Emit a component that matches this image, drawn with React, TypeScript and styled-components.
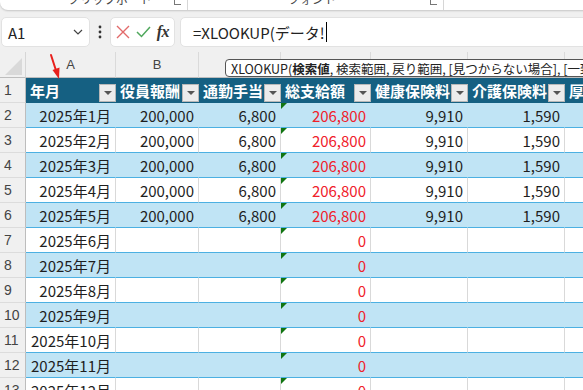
import React from 'react';
import styled, { createGlobalStyle } from 'styled-components';

const GlobalStyle = createGlobalStyle`
  html, body {
    margin: 0;
    padding: 0;
    background: #f0f0f0;
    overflow: hidden;
  }
  * {
    box-sizing: border-box;
  }
`;

const FONT = `"Noto Sans CJK JP", "Noto Sans", sans-serif`;
const HEAD_BLUE = '#156082';
const BAND = '#c0e4f5';
const BAND_LINE = '#4cb0e2';

const Page = styled.div`
  position: relative;
  width: 583px;
  height: 390px;
  overflow: hidden;
  display: flex;
  flex-direction: column;
  font-family: ${FONT};
  background: #f0f0f0;
`;

const Ribbon = styled.div`
  height: 10px;
  flex-shrink: 0;
  background: #ffffff;
  border-bottom-left-radius: 8px;
  box-shadow: 0 1px 2px rgba(0, 0, 0, 0.18);
  overflow: hidden;
  display: flex;
  align-items: flex-start;
  margin-right: -10px;
`;

const RibbonGroup = styled.div<{ $width: number; $pad?: number }>`
  width: ${(p) => p.$width}px;
  flex-shrink: 0;
  height: 10px;
  display: flex;
  align-items: flex-start;
  padding-left: ${(p) => p.$pad ?? 0}px;
  position: relative;
  border-right: 1px solid #d6d6d6;
`;

const RibbonLabel = styled.span`
  margin-top: -8px;
  font-size: 12px;
  line-height: 14px;
  color: #444;
  white-space: nowrap;
`;

const Launcher = styled.span`
  position: absolute;
  right: 6px;
  top: 0;
  width: 7px;
  height: 5px;
  border-left: 1px solid #777;
  border-bottom: 1px solid #777;
`;

const FormulaRow = styled.div`
  display: flex;
  align-items: stretch;
  flex-shrink: 0;
  height: 30px;
  margin-top: 7px;
  padding-left: 1px;
  margin-right: -12px;
`;

const NameBox = styled.div`
  width: 89px;
  flex-shrink: 0;
  background: #fff;
  border: 1px solid #e2e2e2;
  border-radius: 5px;
  display: flex;
  align-items: center;
  justify-content: space-between;
  padding: 0 6px 0 6px;
  font-size: 15px;
  color: #222;
`;

const Dots = styled.div`
  width: 20px;
  flex-shrink: 0;
  display: flex;
  align-items: center;
  justify-content: center;
`;

const ButtonBox = styled.div`
  width: 65px;
  flex-shrink: 0;
  background: #fff;
  border: 1px solid #e2e2e2;
  border-radius: 5px;
  display: flex;
  align-items: center;
  justify-content: space-between;
  padding: 0 5px 0 5px;
`;

const Fx = styled.span`
  font-family: "Liberation Serif", "DejaVu Serif", serif;
  font-style: italic;
  font-weight: bold;
  font-size: 16px;
  color: #333;
  letter-spacing: -0.5px;
`;

const FormulaInput = styled.div`
  flex: 1;
  margin-left: 5px;
  background: #fff;
  border: 1px solid #e2e2e2;
  border-radius: 5px;
  display: flex;
  align-items: center;
  padding-left: 12px;
  font-size: 15px;
  color: #222;
  white-space: nowrap;
`;

const Caret = styled.span`
  display: inline-block;
  width: 1px;
  height: 20px;
  background: #000;
  margin-left: 1px;
`;

const Sheet = styled.div`
  margin-top: 5px;
  display: grid;
  grid-template-columns: 26px 90px 83px 82px 90px 97px 97px 60px;
  grid-template-rows: 26px;
  grid-auto-rows: 25px;
  width: 625px;
  flex-shrink: 0;
`;

const Corner = styled.div`
  background: #f0f0f0;
  border-right: 1px solid #d6d6d6;
  border-bottom: 1px solid #bdbdbd;
  position: relative;
  &::after {
    content: '';
    position: absolute;
    right: 3px;
    bottom: 2px;
    border-style: solid;
    border-width: 0 0 17px 17px;
    border-color: transparent transparent #d9d9d9 transparent;
  }
`;

const ColHead = styled.div`
  background: #f0f0f0;
  border-right: 1px solid #dadada;
  border-bottom: 1px solid #bdbdbd;
  display: flex;
  align-items: center;
  justify-content: center;
  font-size: 13px;
  color: #444;
  font-family: "Liberation Sans", Arial, sans-serif;
`;

const RowNum = styled.div`
  background: #f0f0f0;
  border-right: 1px solid #bdbdbd;
  border-bottom: 1px solid #dcdcdc;
  display: flex;
  align-items: center;
  padding-left: 4px;
  font-size: 14px;
  color: #444;
  font-family: "Liberation Sans", Arial, sans-serif;
`;

const HeadCell = styled.div`
  background: ${HEAD_BLUE};
  color: #fff;
  font-weight: bold;
  font-size: 15px;
  display: flex;
  align-items: center;
  justify-content: space-between;
  padding-left: 4px;
  white-space: nowrap;
  overflow: hidden;
`;

const FilterButton = styled.span`
  align-self: flex-end;
  margin-bottom: 1px;
  flex-shrink: 0;
  width: 17px;
  height: 18px;
  background: #ececec;
  border: 1px solid #b8b8b8;
  display: flex;
  align-items: center;
  justify-content: center;
  &::after {
    content: '';
    border-style: solid;
    border-width: 4px 4px 0 4px;
    border-color: #555 transparent transparent transparent;
  }
`;

const Cell = styled.div<{ $band: boolean; $red?: boolean; $flag?: boolean }>`
  position: relative;
  background: ${(p) => (p.$band ? BAND : '#fff')};
  border-right: 1px solid ${(p) => (p.$band ? BAND : '#d9d9d9')};
  border-bottom: 1px solid ${BAND_LINE};
  display: flex;
  align-items: center;
  justify-content: flex-end;
  padding-right: 4px;
  font-size: 15px;
  color: ${(p) => (p.$red ? '#f0202a' : '#1e1e1e')};
  white-space: nowrap;
  ${(p) =>
    p.$flag &&
    `
    &::before {
      content: '';
      position: absolute;
      left: 0;
      top: 0;
      border-style: solid;
      border-width: 6px 6px 0 0;
      border-color: #127512 transparent transparent transparent;
    }
  `}
`;

const Tooltip = styled.div`
  position: absolute;
  left: 225px;
  top: 59px;
  height: 18px;
  width: 380px;
  background: #fff;
  border: 1px solid #555;
  border-radius: 4px;
  padding-left: 5px;
  display: flex;
  align-items: center;
  font-size: 12.5px;
  color: #222;
  white-space: nowrap;
  overflow: hidden;
  b {
    font-weight: bold;
  }
`;

const Arrow = styled.svg`
  position: absolute;
  left: 44px;
  top: 53px;
`;

const columns = ['A', 'B', 'C', 'D', 'E', 'F', 'G'];
const headers = ['年月', '役員報酬', '通勤手当', '総支給額', '健康保険料', '介護保険料', '厚生年金'];

type Row = string[];
const months: Row[] = Array.from({ length: 12 }, (_, i) => {
  const m = `2025年${i + 1}月`;
  if (i < 5) return [m, '200,000', '6,800', '206,800', '9,910', '1,590', ''];
  return [m, '', '', '0', '', '', ''];
});

const App: React.FC = () => {
  return (
    <>
      <GlobalStyle />
      <Page>
        <Ribbon>
          <RibbonGroup $width={188} $pad={68}>
            <RibbonLabel>クリップボード</RibbonLabel>
            <Launcher />
          </RibbonGroup>
          <RibbonGroup $width={256} $pad={100}>
            <RibbonLabel>フォント</RibbonLabel>
            <Launcher />
          </RibbonGroup>
          <RibbonGroup $width={160} />
        </Ribbon>

        <FormulaRow>
          <NameBox>
            <span>A1</span>
            <svg width="10" height="6" viewBox="0 0 10 6">
              <path d="M1 1 L5 5 L9 1" fill="none" stroke="#444" strokeWidth="1.2" />
            </svg>
          </NameBox>
          <Dots>
            <svg width="4" height="14" viewBox="0 0 4 14">
              <circle cx="2" cy="2" r="1.4" fill="#333" />
              <circle cx="2" cy="7" r="1.4" fill="#333" />
              <circle cx="2" cy="12" r="1.4" fill="#333" />
            </svg>
          </Dots>
          <ButtonBox>
            <svg width="14" height="14" viewBox="0 0 14 14">
              <path d="M1 1 L13 13 M13 1 L1 13" stroke="#e26a6a" strokeWidth="1.4" />
            </svg>
            <svg width="15" height="12" viewBox="0 0 15 12">
              <path d="M1 6 L5.5 10.5 L14 1" fill="none" stroke="#4fa85c" strokeWidth="1.5" />
            </svg>
            <Fx>fx</Fx>
          </ButtonBox>
          <FormulaInput>
            =XLOOKUP(データ!
            <Caret />
          </FormulaInput>
        </FormulaRow>

        <Sheet>
          <Corner />
          {columns.map((c) => (
            <ColHead key={c}>{c}</ColHead>
          ))}

          <RowNum>1</RowNum>
          {headers.map((h) => (
            <HeadCell key={h}>
              <span>{h}</span>
              <FilterButton />
            </HeadCell>
          ))}

          {months.map((row, r) => {
            const band = r % 2 === 0;
            return (
              <React.Fragment key={r}>
                <RowNum>{r + 2}</RowNum>
                {row.map((v, c) => (
                  <Cell key={c} $band={band} $red={c === 3} $flag={c === 3}>
                    {v}
                  </Cell>
                ))}
              </React.Fragment>
            );
          })}
        </Sheet>

        <Tooltip>
          XLOOKUP(<b>検索値</b>, 検索範囲, 戻り範囲, [見つからない場合], [一致モード], [検索モード])
        </Tooltip>

        <Arrow width="20" height="28" viewBox="0 0 20 28">
          <path d="M7 2 L12.5 19" stroke="#e8201c" strokeWidth="2" strokeLinecap="round" />
          <path d="M8.5 17 L15.5 14.5 L15 26 Z" fill="#e8201c" />
        </Arrow>
      </Page>
    </>
  );
};

export default App;
